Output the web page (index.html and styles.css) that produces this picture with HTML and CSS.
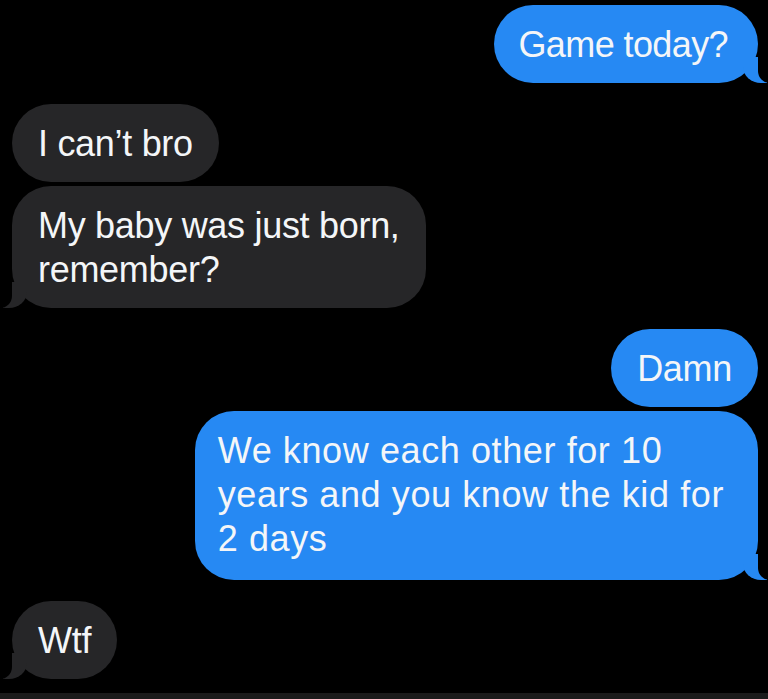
FILE: index.html
```html
<!DOCTYPE html>
<html>
<head>
<meta charset="utf-8">
<link rel="stylesheet" href="styles.css">
</head>
<body>
<div class="page">
  <div class="chat">
    <div class="group sent-group">
      <div class="bubble sent tail">Game today?</div>
    </div>
    <div class="group recv-group">
      <div class="bubble recv">I can’t bro</div>
      <div class="bubble recv tail">My baby was just born,<br>remember?</div>
    </div>
    <div class="group sent-group">
      <div class="bubble sent">Damn</div>
      <div class="bubble sent tail wide">We know each other for 10<br>years and you know the kid for<br>2 days</div>
    </div>
    <div class="group recv-group">
      <div class="bubble recv tail">Wtf</div>
    </div>
  </div>
  <div class="strip"></div>
</div>
</body>
</html>
```

FILE: styles.css
```css
html, body {
  margin: 0;
  padding: 0;
  background: #000;
}
.page {
  height: 699px;
  display: flex;
  flex-direction: column;
  overflow: hidden;
}
.chat {
  display: flex;
  flex-direction: column;
  gap: 21px;
  padding: 5px 10px 0 12px;
}
.group {
  display: flex;
  flex-direction: column;
  gap: 4px;
}
.sent-group { align-items: flex-end; }
.recv-group { align-items: flex-start; }
.bubble {
  position: relative;
  font-family: "Liberation Sans", Arial, sans-serif;
  font-size: 36px;
  line-height: 44px;
  letter-spacing: -0.3px;
  color: #f4f6f8;
  padding: 18px 26px 16px;
  border-radius: 39px;
}
.sent.tail:first-child {
  letter-spacing: -0.6px;
  padding-left: 24px;
  padding-right: 30px;
}
.wide {
  letter-spacing: 0.6px;
  padding: 18px 34px 19px 23px;
}
.sent { background: #2689f3; }
.recv { background: #262628; }
.tail.sent::before {
  content: "";
  position: absolute;
  bottom: 0;
  right: -9px;
  width: 24px;
  height: 26px;
  background: #2689f3;
  border-bottom-left-radius: 18px 16px;
}
.tail.sent::after {
  content: "";
  position: absolute;
  bottom: 0;
  right: -16px;
  width: 16px;
  height: 26px;
  background: #000;
  border-bottom-left-radius: 12px;
}
.tail.recv::before {
  content: "";
  position: absolute;
  bottom: 0;
  left: -9px;
  width: 24px;
  height: 26px;
  background: #262628;
  border-bottom-right-radius: 18px 16px;
}
.tail.recv::after {
  content: "";
  position: absolute;
  bottom: 0;
  left: -16px;
  width: 16px;
  height: 26px;
  background: #000;
  border-bottom-right-radius: 12px;
}
.strip {
  margin-top: auto;
  height: 6px;
  background: #1b1b1b;
}
```
